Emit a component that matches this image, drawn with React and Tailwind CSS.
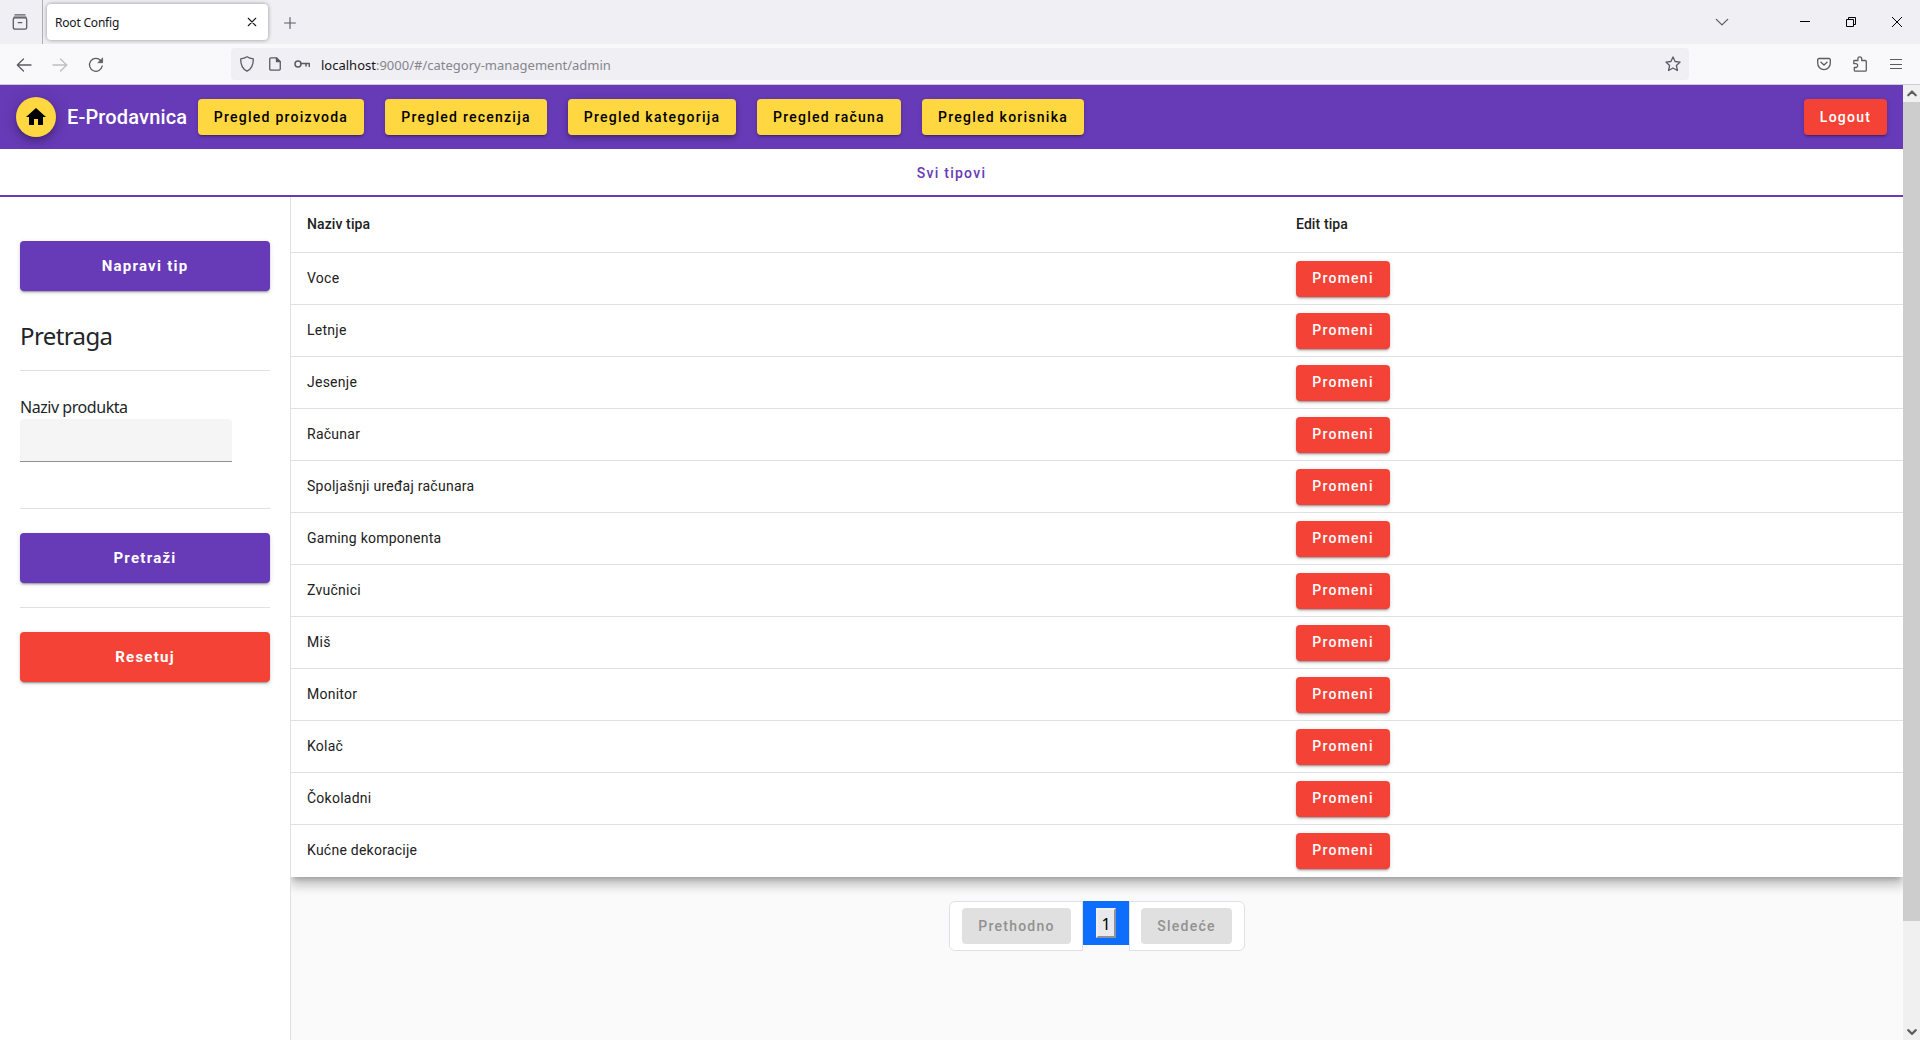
import React from "react";

const NAV = [
  ["Pregled proizvoda", "w-[166px]"],
  ["Pregled recenzija", "w-[162px]"],
  ["Pregled kategorija", "w-[168px]"],
  ["Pregled računa", "w-[144px]"],
  ["Pregled korisnika", "w-[162px]"],
];

const ROWS = [
  "Voce", "Letnje", "Jesenje", "Računar", "Spoljašnji uređaj računara", "Gaming komponenta",
  "Zvučnici", "Miš", "Monitor", "Kolač", "Čokoladni", "Kućne dekoracije",
];

const RAISED = "shadow-[0_3px_1px_-2px_rgba(0,0,0,0.2),0_2px_2px_0_rgba(0,0,0,0.14),0_1px_5px_0_rgba(0,0,0,0.12)]";
const LIFTED = "shadow-[0_2px_4px_-1px_rgba(0,0,0,0.2),0_4px_5px_0_rgba(0,0,0,0.14),0_1px_10px_0_rgba(0,0,0,0.12)]";
const BTN = "flex h-9 shrink-0 items-center justify-center rounded text-sm font-medium tracking-[1.25px]";

function Icon({ children, size = 16, className = "", sw = 1.3 }) {
  return (
    <svg width={size} height={size} viewBox="0 0 16 16" fill="none" stroke="currentColor" strokeWidth={sw} strokeLinecap="round" strokeLinejoin="round" className={"shrink-0 " + className}>
      {children}
    </svg>
  );
}

function TabStrip() {
  return (
    <div className="flex h-11 items-center bg-[#f0eff4] font-['Noto_Sans',sans-serif] text-[#5b5b66]">
      <div className="flex h-11 w-[43px] shrink-0 items-center border-r border-[#aeaeb4] pl-3">
        <Icon>
          <path d="M3 .9h10M2 3.2h12" />
          <rect x="1.3" y="3.8" width="13.4" height="11.4" rx="1.8" />
          <path d="M6.2 8.6h3.6" />
        </Icon>
      </div>
      <div className="ml-1 flex h-9 w-[221px] shrink-0 items-center justify-between rounded bg-white pr-[11px] pl-2 text-[#15141a] shadow-[0_0_4px_rgba(0,0,0,0.4)]">
        <span className="pt-0.5 text-[12px] tracking-[-0.2px] whitespace-nowrap">Root Config</span>
        <Icon size={10} sw={1.7}><path d="M2 2l12 12M14 2L2 14" /></Icon>
      </div>
      <Icon size={12} className="ml-4 mt-px" sw={1.5}><path d="M8 .8v14.4M.8 8h14.4" /></Icon>
      <div className="ml-auto flex items-center">
        <Icon size={14} className="mr-[71px]" sw={1.5}><path d="M1.500 5L8 11.300 14.500 5" /></Icon>
        <svg width="120" height="12" viewBox="0 0 120 12" fill="none" stroke="#000" className="shrink-0">
          <path d="M0 5.500h10M46.500 3.500h7v7h-7zM48.500 3.500v-2h7v7h-2" />
          <path d="M92 1l10 10M102 1L92 11" />
        </svg>
      </div>
    </div>
  );
}

function Toolbar() {
  return (
    <div className="flex h-[41px] items-center border-b border-[#ccccd1] bg-[#f9f9fb] font-['Noto_Sans',sans-serif] text-[#5b5b66]">
      <Icon className="mt-px ml-4"><path d="M15 8H1.500M7.500 2L1.300 8l6.200 6" /></Icon>
      <Icon className="mt-px ml-5 text-[#bdbdc4]"><path d="M1 8h13.500M8.500 2l6.200 6-6.200 6" /></Icon>
      <Icon className="mt-px ml-5"><path d="M14.200 9A6.400 6.400 0 1 1 12.600 3.500" /><path d="M14.600 1.300v4.400h-4.400z" fill="currentColor" strokeWidth=".8" /></Icon>
      <div className="ml-[127px] flex h-8 w-[1458px] shrink-0 items-center rounded bg-[#f0eff4] pr-2 pl-2">
        <Icon><path d="M8 .8c2 1.300 4 1.900 6.300 2.100C14.400 8.800 12.300 13 8 15.200 3.700 13 1.600 8.800 1.700 2.900 4 2.700 6 2.100 8 .8z" /></Icon>
        <Icon size={14} className="ml-[13px]" sw={1.5}><path d="M3.300 1h6.400l4.300 4.300v8.400a1.300 1.300 0 0 1-1.300 1.300H3.300a1.300 1.300 0 0 1-1.300-1.300V2.300A1.300 1.300 0 0 1 3.300 1z" /><path d="M9.700 1v4.300h4.300z" fill="currentColor" /></Icon>
        <Icon className="ml-[12px]" sw={1.5}><circle cx="4" cy="8" r="3" /><path d="M7 7.500h8.300v3M12 7.500v2.500" /></Icon>
        <span className="ml-[11px] pt-[3px] text-[13px] tracking-[0px] whitespace-nowrap text-[#85858c]"><span className="text-[#15141a]">localhost</span>:9000/#/category-management/admin</span>
        <Icon className="ml-auto"><path d="M8 .9l2.100 4.600 5 .6-3.700 3.400 1 5L8 12l-4.400 2.500 1-5L.9 6.100l5-.6z" /></Icon>
      </div>
      <div className="mr-[18px] ml-auto flex items-center">
        <Icon size={14} sw={1.5}><path d="M2.200 1.700h11.600a1.400 1.400 0 0 1 1.400 1.400V7.200a7.200 7.200 0 0 1-14.400 0V3.100a1.400 1.400 0 0 1 1.400-1.400zM4.500 6l3.500 3.200L11.500 6" /></Icon>
        <Icon className="ml-[21px]"><path d="M2.500 4.500h3.400V2.800a1.900 1.900 0 0 1 3.800 0v1.700h3.600a1 1 0 0 1 1 1v8.700a1 1 0 0 1-1 1H3.300a1 1 0 0 1-1-1v-2.700h1.400a1.900 1.900 0 0 0 0-3.900H1.800V5.200a.7.700 0 0 1 .7-.7z" /></Icon>
        <svg width="12" height="11" viewBox="0 0 12 11" stroke="currentColor" className="ml-[22px]"><path d="M0 .5h12M0 5.500h12M0 9.500h12" /></svg>
      </div>
    </div>
  );
}

function Navbar() {
  return (
    <nav className="flex h-16 items-center bg-[#673ab7] px-4">
      <div className="flex size-10 shrink-0 items-center justify-center rounded-full bg-[#ffd740] text-black shadow-[0_3px_5px_-1px_rgba(0,0,0,0.2),0_6px_10px_0_rgba(0,0,0,0.14),0_1px_18px_0_rgba(0,0,0,0.12)]">
        <svg width="24" height="24" viewBox="0 0 24 24" fill="currentColor"><path d="M10 20v-6h4v6h5v-8h3L12 3 2 12h3v8z" /></svg>
      </div>
      <span className="ml-[11px] w-[131px] shrink-0 text-xl font-medium tracking-[0.16px] whitespace-nowrap text-white">E-Prodavnica</span>
      <div className="flex gap-[21px]">
        {NAV.map(([label, w], i) => (
          <button key={label} className={`${BTN} ${w} bg-[#ffd740] text-black ${i === 2 ? LIFTED : RAISED}`}>{label}</button>
        ))}
      </div>
      <button className={`${BTN} ${RAISED} ml-auto w-[83px] bg-[#f44336] text-white`}>Logout</button>
    </nav>
  );
}

function SideButton({ children, className }) {
  return (
    <button className={`flex h-[50px] w-full shrink-0 items-center justify-center rounded text-[15px] font-bold tracking-[1.25px] text-white ${RAISED} ${className}`}>{children}</button>
  );
}

function Sidebar() {
  return (
    <aside className="flex w-[291px] shrink-0 flex-col border-r border-[#e0e0e0] bg-white px-5 pt-11 text-[#212529]">
      <SideButton className="bg-[#673ab7]">Napravi tip</SideButton>
      <h2 className="mt-[29px] h-[50px] font-['Noto_Sans',sans-serif] text-[24px] leading-[32px] tracking-[-0.6px]">Pretraga</h2>
      <hr className="border-[#e0e0e0]" />
      <label className="mt-6 h-6 font-['Noto_Sans',sans-serif] text-base leading-6 tracking-[-0.45px]">Naziv produkta</label>
      <div className="h-[43px] w-[212px] shrink-0 rounded-t border-b border-[#8f8f8f] bg-[#f5f5f5]" />
      <hr className="mt-[46px] border-[#e0e0e0]" />
      <SideButton className="mt-6 bg-[#673ab7]">Pretraži</SideButton>
      <hr className="mt-6 border-[#e0e0e0]" />
      <SideButton className="mt-6 bg-[#f44336]">Resetuj</SideButton>
    </aside>
  );
}

function Table() {
  return (
    <div className="bg-white text-sm text-[#212121] shadow-[0_5px_5px_-3px_rgba(0,0,0,0.2),0_8px_10px_1px_rgba(0,0,0,0.14),0_3px_14px_2px_rgba(0,0,0,0.12)]">
      <div className="flex h-14 items-center border-b border-[#e0e0e0] pb-0.5 pl-4 font-medium tracking-[0.1px]">
        <span className="w-[989px]">Naziv tipa</span>
        <span>Edit tipa</span>
      </div>
      {ROWS.map((name) => (
        <div key={name} className="flex h-[52px] items-start border-b border-[#e0e0e0] pt-2 pl-4 last:border-b-0">
          <span className="w-[989px] leading-[34px] tracking-[0.25px]">{name}</span>
          <button className={`${BTN} ${RAISED} w-[94px] bg-[#f44336] pb-0.5 text-white`}>Promeni</button>
        </div>
      ))}
    </div>
  );
}

function Pagination() {
  return (
    <div className="mt-6 flex items-start justify-center">
      <div className="flex h-[50px] w-[134px] items-start rounded-l-md border border-[#dee2e6] bg-white pl-3">
        <button className={`${BTN} mt-1.5 w-[109px] bg-[#e0e0e0] text-[#919191]`}>Prethodno</button>
      </div>
      <div className="flex h-11 w-[46px] items-start justify-center bg-[#0d6efd] pt-[7px]">
        <button className="h-[30px] w-5 border-2 border-t-[#f0f0f0] border-r-[#8f8f9d] border-b-[#8f8f9d] border-l-[#f0f0f0] bg-[#e9e9ed] pt-px font-['Noto_Sans',sans-serif] text-base leading-[26px] text-black">1</button>
      </div>
      <div className="flex h-[50px] w-[116px] items-start rounded-r-md border border-[#dee2e6] bg-white pl-[11px]">
        <button className={`${BTN} mt-1.5 w-[91px] bg-[#e0e0e0] text-[#919191]`}>Sledeće</button>
      </div>
    </div>
  );
}

function Scrollbar() {
  return (
    <div className="flex w-[17px] shrink-0 flex-col bg-[#f0f0f0] text-[#606060]">
      <div className="flex h-[17px] items-center justify-center"><Icon size={10} sw={3.4}><path d="M2 10l6-6 6 6" /></Icon></div>
      <div className="h-[819px] bg-[#cdcdcd]" />
      <div className="mt-auto flex h-[17px] items-center justify-center"><Icon size={10} sw={3.4}><path d="M2 5l6 6 6-6" /></Icon></div>
    </div>
  );
}

export default function App() {
  return (
    <div className="flex h-[1040px] w-[1920px] flex-col overflow-hidden bg-white font-[Roboto,sans-serif]">
      <TabStrip />
      <Toolbar />
      <div className="flex min-h-0 flex-1">
        <div className="flex min-w-0 flex-1 flex-col overflow-hidden">
          <Navbar />
          <div className="flex h-12 shrink-0 items-center justify-center border-b-2 border-[#673ab7] bg-white pt-0.5 text-sm font-medium tracking-[1.25px] text-[#673ab7]">Svi tipovi</div>
          <div className="flex min-h-0 flex-1">
            <Sidebar />
            <main className="min-w-0 flex-1 overflow-hidden bg-[#fafafa]">
              <Table />
              <Pagination />
            </main>
          </div>
        </div>
        <Scrollbar />
      </div>
    </div>
  );
}
